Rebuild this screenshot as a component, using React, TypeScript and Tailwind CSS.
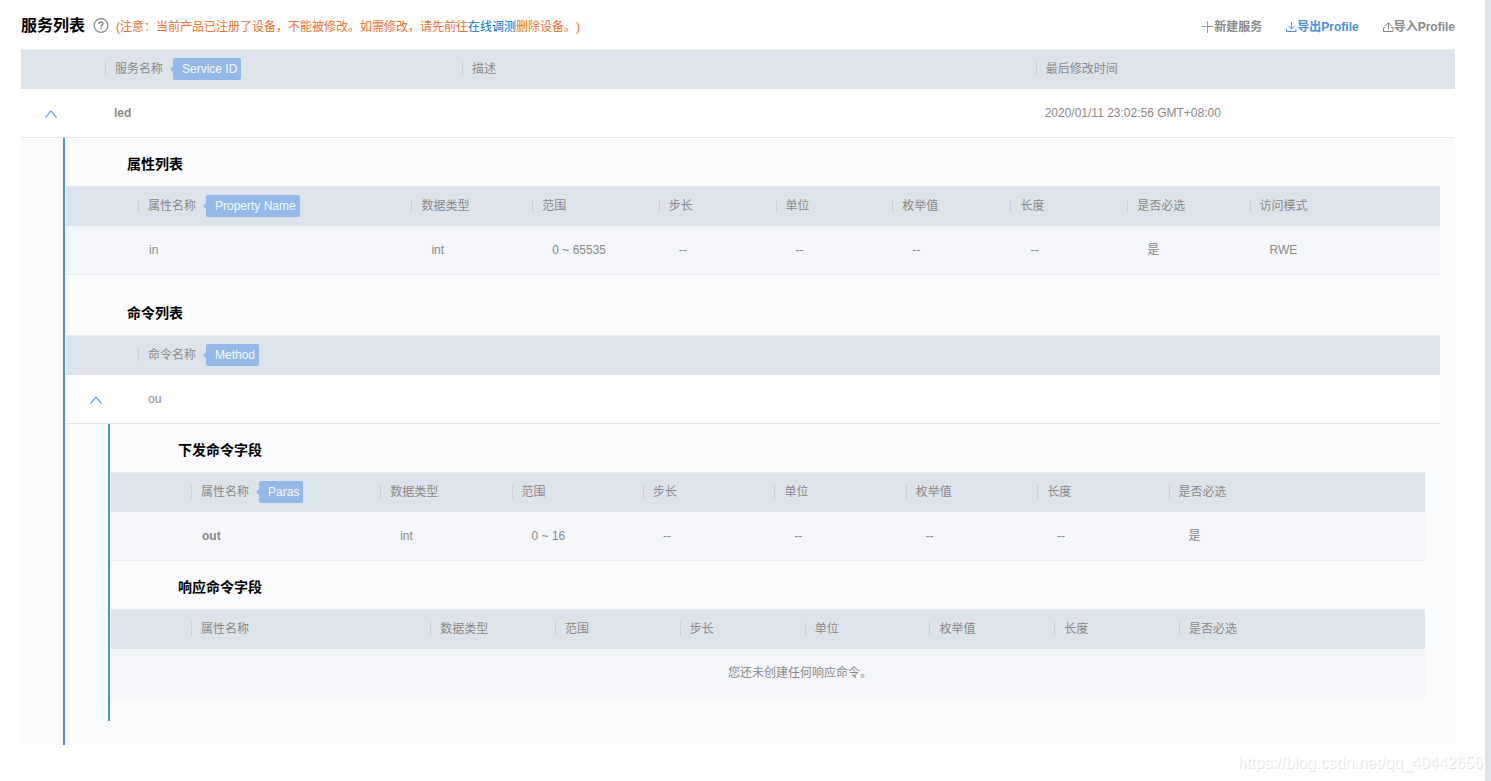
import type { ReactNode } from 'react';
import clsx from 'clsx';

type Column = { label: string; width: string; tag?: string };

const serviceColumns: Column[] = [
  { label: '服务名称', width: 'w-[24.9%]', tag: 'Service ID' },
  { label: '描述', width: 'w-[40%]' },
  { label: '最后修改时间', width: '' },
];

const propertyColumns: Column[] = [
  { label: '属性名称', width: 'w-[19.9%]', tag: 'Property Name' },
  { label: '数据类型', width: 'w-[8.8%]' },
  { label: '范围', width: 'w-[9.2%]' },
  { label: '步长', width: 'w-[8.5%]' },
  { label: '单位', width: 'w-[8.5%]' },
  { label: '枚举值', width: 'w-[8.6%]' },
  { label: '长度', width: 'w-[8.5%]' },
  { label: '是否必选', width: 'w-[8.9%]' },
  { label: '访问模式', width: '' },
];

const commandColumns: Column[] = [{ label: '命令名称', width: '', tag: 'Method' }];

const paramColumns: Column[] = [
  { label: '属性名称', width: 'w-[14.4%]', tag: 'Paras' },
  { label: '数据类型', width: 'w-[10%]' },
  { label: '范围', width: 'w-[10%]' },
  { label: '步长', width: 'w-[10%]' },
  { label: '单位', width: 'w-[10%]' },
  { label: '枚举值', width: 'w-[10%]' },
  { label: '长度', width: 'w-[10%]' },
  { label: '是否必选', width: '' },
];

const responseColumns: Column[] = [
  { label: '属性名称', width: 'w-[18.2%]' },
  { label: '数据类型', width: 'w-[9.5%]' },
  { label: '范围', width: 'w-[9.5%]' },
  { label: '步长', width: 'w-[9.5%]' },
  { label: '单位', width: 'w-[9.5%]' },
  { label: '枚举值', width: 'w-[9.5%]' },
  { label: '长度', width: 'w-[9.5%]' },
  { label: '是否必选', width: '' },
];

function Tag({ children }: { children: ReactNode }) {
  return (
    <span className="flex items-center ml-[7px]">
      <svg width="3" height="6" viewBox="0 0 3 6" className="shrink-0" aria-hidden="true">
        <path d="M3 0v6L0 3z" fill="#94b9e8" />
      </svg>
      <span className="h-[22px] leading-[22px] pl-[9px] pr-1 rounded-xs bg-[#94b9e8] text-[#f4f8fd] whitespace-nowrap">
        {children}
      </span>
    </span>
  );
}

function DataTable({ lead, columns, children }: { lead: string; columns: Column[]; children: ReactNode }) {
  return (
    <table className="w-full table-fixed border-separate border-spacing-0 text-left">
      <thead>
        <tr>
          <td className={clsx('h-10 p-0 border-t border-[#e8ebee] bg-[#dde3eb]', lead)} />
          {columns.map(c => (
            <th key={c.label} scope="col" className={clsx('h-10 p-0 pb-0.5 border-t border-[#e8ebee] bg-[#dde3eb] font-normal', c.width)}>
              <div className="flex items-center">
                <span className="w-px h-3.5 mr-[9px] bg-[#c5cfdf]" />
                <span className="whitespace-nowrap">{c.label}</span>
                {c.tag && <Tag>{c.tag}</Tag>}
              </div>
            </th>
          ))}
        </tr>
      </thead>
      <tbody>{children}</tbody>
    </table>
  );
}

function ValueRow({ values, bold }: { values: string[]; bold?: boolean }) {
  return (
    <tr>
      <td className="h-[49px] p-0 bg-[#f4f6fa] border-b border-[#e9ecef]" />
      {values.map((v, i) => (
        <td
          key={i}
          className={clsx(
            'h-[49px] p-0 bg-[#f4f6fa] border-b border-[#e9ecef]',
            i === 0 ? 'pl-[11px]' : 'pl-5',
            i === 0 && bold && 'font-bold',
          )}
        >
          {v}
        </td>
      ))}
    </tr>
  );
}

function Collapse({ label }: { label: string }) {
  return (
    <button type="button" aria-label={label} aria-expanded="true" className="block ml-6 mt-0.5">
      <svg width="12" height="8" viewBox="0 0 12 8" fill="none" stroke="#4a90e2" strokeWidth="1.1">
        <path d="M0.4 7.6 6 1l5.600 6.600" />
      </svg>
    </button>
  );
}

// Expanded area under a row, marked with a blue rule on the left
function Detail({ span, children }: { span: number; children: ReactNode }) {
  return (
    <tr>
      <td colSpan={span} className="p-0 bg-[#fafbfd]">
        <div className="ml-[42px] border-l-2 border-[#4a90e2] pl-px pr-[15px] pb-6">{children}</div>
      </td>
    </tr>
  );
}

export default function App() {
  return (
    <div className="relative min-h-screen bg-white border-r-6 border-[#dde3eb] pl-[21px] pr-[30px] text-xs text-[#8a8a8a] font-['Liberation_Sans','Noto_Sans_CJK_SC',sans-serif] [text-spacing-trim:space-all]">
      {/* Title bar */}
      <header className="flex items-center justify-between pt-3.5 pb-[11px]">
        <div className="flex items-center">
          <h1 className="text-base leading-6 font-bold text-black">服务列表</h1>
          <button type="button" aria-label="帮助" className="ml-2">
            <svg width="16" height="16" viewBox="0 0 16 16" fill="none" stroke="#8a8a8a" strokeWidth="1.300" className="block">
              <circle cx="8" cy="7.500" r="6.900" />
              <path d="M6 6c0-1.200.9-1.900 2-1.900s2 .7 2 1.700c0 1.300-1.900 1.400-1.900 2.900" strokeWidth="1.500" />
              <path d="M8.100 9.700v1.600" strokeWidth="1.600" />
            </svg>
          </button>
          <p className="ml-[7px] pt-0.5 text-[#f0702e]">
            (注意：当前产品已注册了设备，不能被修改。如需修改，请先前往
            <a href="#debug" className="text-[#0070e0]">在线调测</a>
            删除设备。)
          </p>
        </div>
        <div className="flex items-center gap-6 pt-0.5 font-bold">
          <button type="button" className="flex items-center">
            <svg width="13" height="12" viewBox="0 0 13 12" stroke="#9a9a9a" aria-hidden="true">
              <path d="M6.500 0v12M.5 5.500h12" />
            </svg>
            新建服务
          </button>
          <button type="button" className="flex items-center text-[#4a90e2]">
            <svg width="11" height="12" viewBox="0 0 11 12" fill="none" stroke="#4a90e2" aria-hidden="true">
              <path d="M5.500 1v6.800M2.500 5l3 3 3-3M.5 7.500v3h9.500v-3" />
            </svg>
            导出Profile
          </button>
          <button type="button" className="flex items-center">
            <svg width="11" height="12" viewBox="0 0 11 12" fill="none" stroke="#8a8a8a" aria-hidden="true">
              <path d="M5.500 8.500V2M2.300 5l3.200-3.300L8.700 5M2.500 6.500h-2v4h9.500v-4h-2" />
            </svg>
            导入Profile
          </button>
        </div>
      </header>

      {/* Services */}
      <DataTable lead="w-[84px]" columns={serviceColumns}>
        <tr>
          <td className="h-[49px] p-0 border-b border-[#e4e7eb]"><Collapse label="收起 led" /></td>
          <td className="h-[49px] p-0 pl-[9px] border-b border-[#e4e7eb] font-bold">led</td>
          <td className="h-[49px] p-0 pl-[9px] border-b border-[#e4e7eb]" />
          <td className="h-[49px] p-0 pl-[9px] border-b border-[#e4e7eb]">2020/01/11 23:02:56 GMT+08:00</td>
        </tr>
        <Detail span={4}>
          <h2 className="pt-4 pb-3 pl-[61px] text-sm font-bold text-black">属性列表</h2>
          <DataTable lead="w-[72px]" columns={propertyColumns}>
            <ValueRow values={['in', 'int', '0 ~ 65535', '--', '--', '--', '--', '是', 'RWE']} />
          </DataTable>

          <h2 className="pt-7 pb-3 pl-[61px] text-sm font-bold text-black">命令列表</h2>
          <DataTable lead="w-[72px]" columns={commandColumns}>
            <tr>
              <td className="h-[49px] p-0 bg-white border-b border-[#e4e7eb]"><Collapse label="收起 ou" /></td>
              <td className="h-[49px] p-0 pl-[10px] bg-white border-b border-[#e4e7eb]">ou</td>
            </tr>
            <Detail span={2}>
              <h3 className="pt-4 pb-3 pl-[67px] text-sm font-bold text-black">下发命令字段</h3>
              <DataTable lead="w-20" columns={paramColumns}>
                <ValueRow bold values={['out', 'int', '0 ~ 16', '--', '--', '--', '--', '是']} />
              </DataTable>

              <h3 className="pt-4 pb-3 pl-[67px] text-sm font-bold text-black">响应命令字段</h3>
              <DataTable lead="w-20" columns={responseColumns}>
                <tr>
                  <td colSpan={9} className="h-12 p-0 pl-16 bg-[#f4f6fa] text-center">
                    您还未创建任何响应命令。
                  </td>
                </tr>
              </DataTable>
            </Detail>
          </DataTable>
        </Detail>
      </DataTable>

      <div className="absolute right-0.5 bottom-1.5 text-base text-white [text-shadow:1px_1px_1px_#dcdcdc]">
        https://blog.csdn.net/qq_40442656
      </div>
    </div>
  );
}
